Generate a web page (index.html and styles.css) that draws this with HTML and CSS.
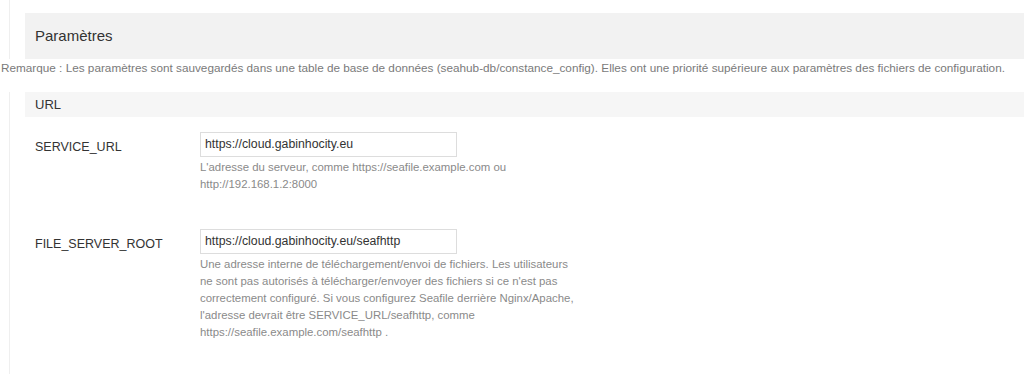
FILE: index.html
```html
<!DOCTYPE html>
<html lang="fr">
<head>
<meta charset="utf-8">
<title>Paramètres</title>
<link rel="stylesheet" href="styles.css">
</head>
<body>
<div class="main">
  <div class="content">
    <h3 class="hd">Paramètres</h3>
    <p class="remark">Remarque : Les paramètres sont sauvegardés dans une table de base de données (seahub-db/constance_config). Elles ont une priorité supérieure aux paramètres des fichiers de configuration.</p>
    <h4 class="section">URL</h4>
    <div class="row">
      <label class="label">SERVICE_URL</label>
      <div class="field">
        <div class="input">https://cloud.gabinhocity.eu</div>
        <p class="help">L'adresse du serveur, comme https://seafile.example.com ou http://192.168.1.2:8000</p>
      </div>
    </div>
    <div class="row">
      <label class="label">FILE_SERVER_ROOT</label>
      <div class="field">
        <div class="input">https://cloud.gabinhocity.eu/seafhttp</div>
        <p class="help">Une adresse interne de téléchargement/envoi de fichiers. Les utilisateurs ne sont pas autorisés à télécharger/envoyer des fichiers si ce n'est pas correctement configuré. Si vous configurez Seafile derrière Nginx/Apache, l'adresse devrait être SERVICE_URL/seafhttp, comme https://seafile.example.com/seafhttp .</p>
      </div>
    </div>
  </div>
</div>
</body>
</html>
```

FILE: styles.css
```css
html, body {
  margin: 0;
  padding: 0;
  background: #fff;
  font-family: "Liberation Sans", Arial, sans-serif;
  color: #333;
  overflow: hidden;
}
.main {
  margin-left: 9px;
  border-left: 1px solid #efefef;
  height: 374px;
}
.content {
  padding: 13px 0 0 15px;
}
.hd {
  margin: 0;
  height: 46px;
  line-height: 46px;
  background: #f2f2f2;
  padding-left: 10px;
  font-size: 15px;
  font-weight: normal;
  color: #333;
}
.remark {
  position: relative;
  margin: 0 0 0 -25px;
  padding: 0 0 0 1px;
  height: 33px;
  line-height: 17px;
  font-size: 11.75px;
  color: #7a7a7a;
  white-space: nowrap;
  background: #fff;
}
.section {
  margin: 0;
  height: 25px;
  line-height: 25px;
  background: #f6f6f6;
  padding-left: 10px;
  font-size: 13px;
  font-weight: normal;
  color: #333;
}
.row {
  display: flex;
  padding-left: 10px;
  margin-top: 15px;
}
.row + .row {
  margin-top: 36px;
}
.label {
  width: 165px;
  flex: none;
  font-size: 12.5px;
  padding-top: 8px;
  color: #333;
}
.field {
  width: 380px;
}
.input {
  box-sizing: border-box;
  width: 257px;
  height: 25px;
  border: 1px solid #ddd;
  padding: 0 4px;
  line-height: 23px;
  font-size: 12.3px;
  color: #333;
}
.help {
  margin: 2px 0 0 0;
  font-size: 11.4px;
  line-height: 17px;
  color: #8a8a8a;
}
```
